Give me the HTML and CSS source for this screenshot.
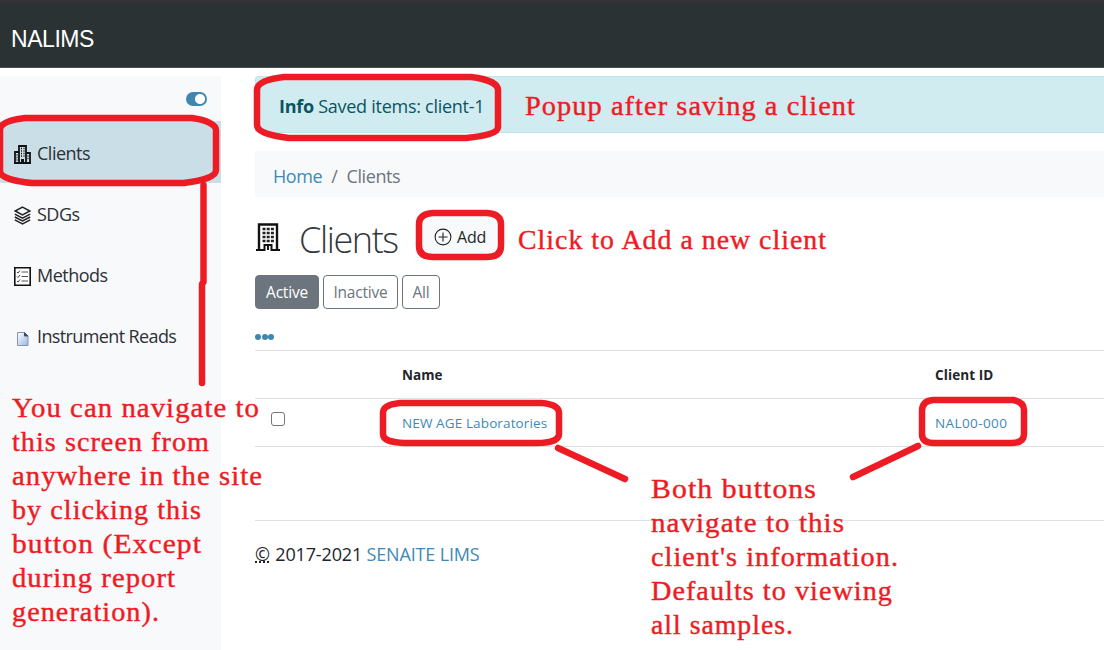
FILE: index.html
```html
<!DOCTYPE html>
<html lang="en">
<head>
<meta charset="utf-8">
<title>NALIMS - Clients</title>
<link rel="stylesheet" href="styles.css">
</head>
<body>
<header class="topbar"><span class="brand">NALIMS</span></header>
<div class="layout">
  <nav class="sidebar">
    <div class="toggle-row"><span class="toggle"></span></div>
    <a class="nav-item active">
      <svg class="nav-icon" viewBox="0 0 17 19"><path d="M5 18V1h7v17M1 18V7h4M12 8h4v10M0 18h17" fill="none" stroke="#111" stroke-width="1.8"/><path d="M7 3.500h1M9.500 3.500h1M7 6h1M9.500 6h1M7 8.500h1M9.500 8.500h1M7 11h1M9.500 11h1M2.500 10h1M2.500 12.500h1M2.500 15h1M13.500 11h1M13.500 13.500h1" stroke="#111" stroke-width="1.400"/><path d="M7 14h3v4H7z" fill="#111"/></svg>
      <span class="lb-clients">Clients</span></a>
    <a class="nav-item">
      <svg class="nav-icon" viewBox="0 0 17 19"><path d="M8.500 1.200 15.800 5 8.500 8.800 1.200 5zM.8 8.200l7.700 4 7.700-4M.8 11l7.700 4 7.700-4M.8 13.800l7.700 4 7.700-4" fill="none" stroke="#222" stroke-width="1.500"/></svg>
      <span class="lb-sdgs">SDGs</span></a>
    <a class="nav-item">
      <svg class="nav-icon" viewBox="0 0 17 19"><path d="M.8.800h15.400v17.400H.8z" fill="#fff" stroke="#111" stroke-width="1.600"/><path d="m3 5 1 1 2-2.500M3 9.500l1 1L6 8M3 14l1 1 2-2.500" fill="none" stroke="#444"/><path d="M7.500 5H14M7.500 9.500H14M7.500 14H14" stroke="#555" stroke-width="1.200"/></svg>
      <span class="lb-methods">Methods</span></a>
    <a class="nav-item">
      <svg class="nav-icon" viewBox="0 0 17 19"><defs><linearGradient id="page" x2="1" y2="1"><stop stop-color="#fff"/><stop offset="1" stop-color="#94b9e6"/></linearGradient></defs><path d="M3.500 4.500h7l3.500 3.500v9.500H3.500z" fill="url(#page)" stroke="#8895a8"/><path d="M10.500 4.500 14 8h-3.500z" fill="#38516f" stroke="#38516f"/></svg>
      <span class="lb-reads">Instrument Reads</span></a>
  </nav>
  <main class="content">
    <div class="alert"><span class="lb-alert"><b>Info</b> Saved items: client-1</span></div>
    <div class="crumbs"><a class="lb-home">Home</a><span class="sep">/</span><span class="lb-crumb">Clients</span></div>
    <div class="heading">
      <svg class="building" viewBox="0 0 26 28"><path d="M4 27V1.500h18V27" fill="none" stroke="#111" stroke-width="2.400"/><path d="M1 27h8.500v-5h7v5H25M13 22v5" fill="none" stroke="#111" stroke-width="2"/><path d="M7.500 6H19M7.500 10H19M7.500 14H19M7.500 18H19" stroke="#222" stroke-width="2.600" stroke-dasharray="3 1.200"/></svg>
      <h1>Clients</h1>
      <a class="add"><svg viewBox="0 0 18 18"><circle cx="9" cy="9" r="7.900"/><path d="M9 4.500v9M4.500 9h9"/></svg><span>Add</span></a>
    </div>
    <div class="filters"><a class="btn on">Active</a><a class="btn inactive">Inactive</a><a class="btn all">All</a></div>
    <div class="dots"><i></i><i></i><i></i></div>
    <div class="table">
      <div class="row head"><span></span><b class="th-name">Name</b><b class="th-id">Client ID</b></div>
      <div class="row body"><span class="check"></span><a class="td-name">NEW AGE Laboratories</a><a class="td-id">NAL00-000</a></div>
    </div>
    <footer><span><abbr>©</abbr> 2017-2021 <a>SENAITE LIMS</a></span></footer>
  </main>
</div>
<svg class="notes" viewBox="0 0 1104 650">
  <g class="ink">
    <path d="M25 118H192C207 120 216 125 216 130V170C216 176 206 180 184 183H32C12 181 0 177 0 171V130C0 124 8 120 25 118z"/>
    <path d="M284 77H471C488 79 498 84 498 90V127C498 133 486 136 466 138H289C270 136 257 132 257 125V90C257 83 267 79 284 77z"/>
    <path d="M433 213H487Q501 214 501 224V246Q501 257 487 257H433Q419 257 419 246V224Q419 214 433 213z"/>
    <path d="M400 403H541C554 404 559 408 559 413V434C559 440 550 443 537 443H404C390 442 383 440 383 434V413C383 407 390 404 400 403z"/>
    <path d="M933 400H1013Q1024 402 1024 410V434Q1024 443 1011 443H934Q922 443 922 434V411Q922 401 933 400z"/>
    <path d="M203.500 185V282L202 284V383"/>
    <path d="M558 448 625 479M918 446 853 477"/>
  </g>
  <g class="note">
    <text x="525" y="115" textLength="331" lengthAdjust="spacingAndGlyphs">Popup after saving a client</text>
    <text x="518" y="249" textLength="309" lengthAdjust="spacingAndGlyphs">Click to Add a new client</text>
    <text x="12" y="417" textLength="248" lengthAdjust="spacingAndGlyphs">You can navigate to</text>
    <text x="12" y="451" textLength="198" lengthAdjust="spacingAndGlyphs">this screen from</text>
    <text x="12" y="485" textLength="251" lengthAdjust="spacingAndGlyphs">anywhere in the site</text>
    <text x="12" y="519" textLength="190" lengthAdjust="spacingAndGlyphs">by clicking this</text>
    <text x="12" y="553" textLength="190" lengthAdjust="spacingAndGlyphs">button (Except</text>
    <text x="12" y="587" textLength="164" lengthAdjust="spacingAndGlyphs">during report</text>
    <text x="12" y="621" textLength="148" lengthAdjust="spacingAndGlyphs">generation).</text>
    <text x="651" y="497.500" textLength="166" lengthAdjust="spacingAndGlyphs">Both buttons</text>
    <text x="651" y="531.500" textLength="194" lengthAdjust="spacingAndGlyphs">navigate to this</text>
    <text x="651" y="565.500" textLength="248" lengthAdjust="spacingAndGlyphs">client's information.</text>
    <text x="651" y="599.500" textLength="242" lengthAdjust="spacingAndGlyphs">Defaults to viewing</text>
    <text x="651" y="633.500" textLength="143" lengthAdjust="spacingAndGlyphs">all samples.</text>
  </g>
</svg>
</body>
</html>
```
FILE: styles.css
```css
* { box-sizing: border-box; }
body { margin: 0; width: 1104px; height: 650px; overflow: hidden; background: #fff; color: #212529; font-family: "Open Sans", "Noto Sans", sans-serif; font-size: 18px; }
.topbar { height: 68px; background: #2a3233; border-top: 3px solid #343237; border-bottom: 1px solid #465052; display: flex; align-items: center; padding: 8px 0 0 11px; }
.brand { font: 23px "Liberation Sans", Arial, sans-serif; color: #fff; letter-spacing: -.45px; }
.layout { display: flex; padding-top: 8px; height: 582px; }
.sidebar { width: 221px; height: 574px; background: #f8f9fb; flex: none; }
.toggle-row { height: 45px; padding: 16px 14px 0 0; display: flex; justify-content: flex-end; }
.toggle { width: 21px; height: 14px; border-radius: 7px; background: radial-gradient(circle at 14px 7px, #fff 4.600px, #3f86b0 5.400px); }
.nav-item { height: 61px; padding-left: 14px; display: flex; align-items: center; gap: 6px; white-space: nowrap; color: #2c3035; }
.nav-item.active { height: 62px; padding-top: 2px; background: #cadee7; }
.nav-icon { width: 17px; height: 19px; flex: none; margin-top: 3px; }
.lb-clients, .lb-sdgs, .lb-methods { letter-spacing: -.500px; }
.lb-reads { letter-spacing: -.620px; }
.content { margin-left: 34px; width: 849px; flex: none; }
.alert { height: 57px; background: #d1ecf1; border: 1px solid #bee5eb; border-right: 0; border-radius: 4px 0 0 4px; padding: 3px 0 0 23px; display: flex; align-items: center; color: #0c5460; }
.lb-alert { letter-spacing: -.270px; }
.crumbs { margin-top: 18px; height: 46px; background: #f8f9fb; padding: 4px 0 0 18px; display: flex; align-items: center; color: #6c757d; letter-spacing: -.4px; }
.crumbs a, .body a, footer a { color: #4089b5; }
.sep { margin: 0 9px; }
.heading { height: 78px; display: flex; align-items: center; padding-top: 8px; }
.building { width: 26px; height: 28px; margin-top: -6px; }
h1 { margin: -1px 0 0 18px; font-size: 36px; font-weight: 300; line-height: 44px; letter-spacing: -1.400px; width: 116px; white-space: nowrap; color: #33373c; }
.add { height: 38px; width: 76px; margin: -6px 0 0 5px; background: #f8f9fa; display: flex; align-items: center; gap: 5px; padding-left: 14px; font-size: 16px; letter-spacing: -.2px; }
.add svg { width: 18px; height: 18px; fill: none; stroke: #222; stroke-width: 1.100; flex: none; }
.filters { display: flex; gap: 4px; }
.btn { height: 34px; border: 1px solid #6c757d; border-radius: 4px; display: flex; justify-content: center; align-items: center; color: #6c757d; font-size: 15.500px; letter-spacing: -.2px; }
.on { width: 64px; background: #6c757d; color: #fff; }
.inactive { width: 75px; }
.all { width: 38px; }
.dots { display: flex; gap: .5px; padding: 25px 0 0 0; height: 41px; }
.dots i { width: 6px; height: 6px; border-radius: 50%; background: #3f86b0; }
.row { display: grid; grid-template-columns: 147px 533px 169px; align-items: center; height: 48px; border-top: 1px solid #dee2e6; font-size: 13.500px; }
.row.body { border-bottom: 1px solid #dcdfe1; height: 49px; }
.td-name { letter-spacing: .120px; }
.td-id { letter-spacing: .400px; }
.th-id { letter-spacing: .1px; }
.check { width: 14px; height: 14px; border: 1px solid #767676; border-radius: 3px; margin: -8px 0 0 16px; }
footer { margin-top: 73px; border-top: 1px solid #dee2e6; padding-top: 21px; letter-spacing: -.160px; }
abbr { text-decoration: underline dotted; margin-right: 1px; }
.notes { position: absolute; left: 0; top: 0; width: 1104px; height: 650px; }
.ink { fill: none; stroke: #ed1c24; stroke-width: 6.500; stroke-linecap: round; stroke-linejoin: round; }
.note { fill: #ed1c24; font: 27px "Liberation Serif", "Times New Roman", serif; letter-spacing: 1px; stroke: #ed1c24; stroke-width: .4px; }
```
